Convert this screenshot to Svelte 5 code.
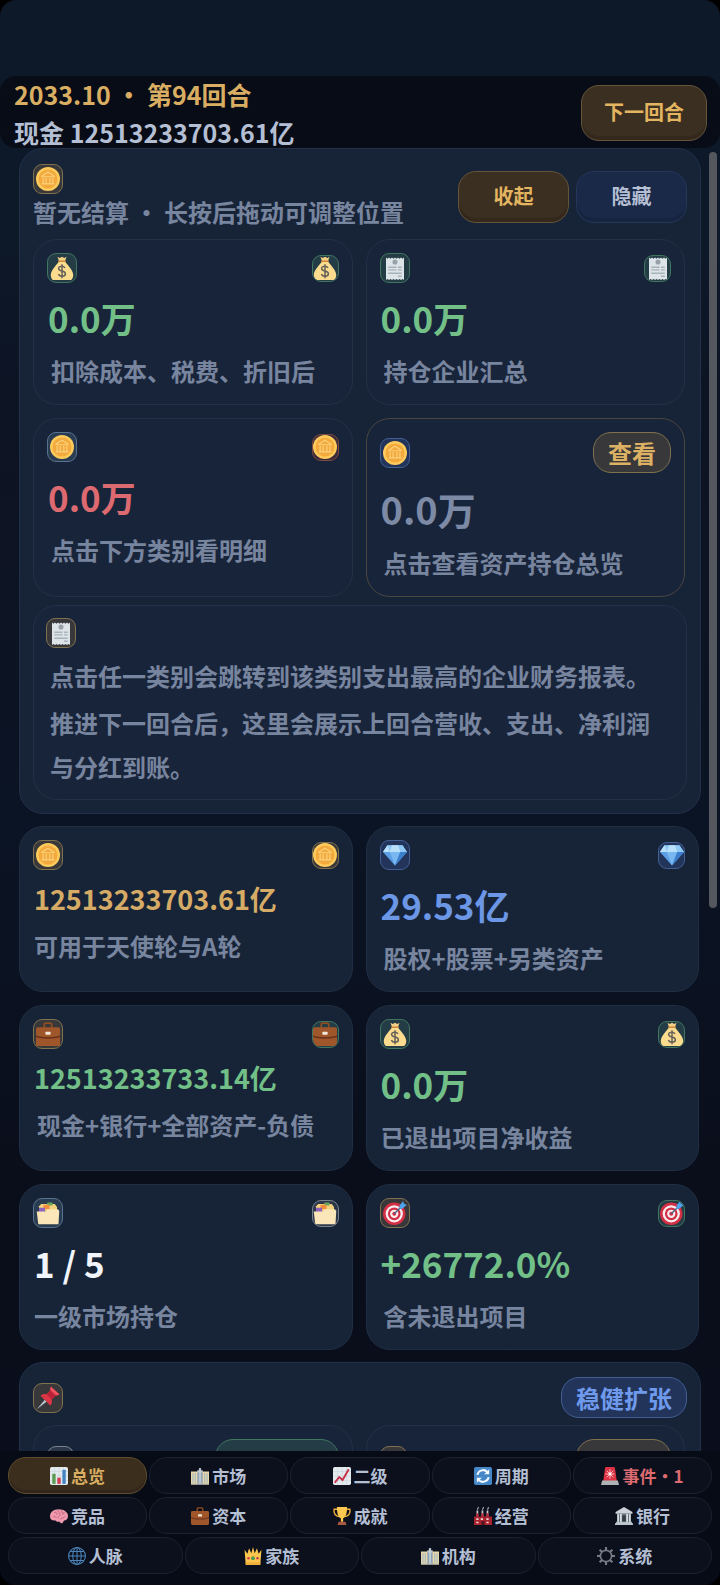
<script>
  let active = $state('总览');
  let collapsed = $state(false);

  const settlement = [
    { icon: 'bag', tint: 'green', badge: 'green', value: '0.0万', tone: 'up', note: '扣除成本、税费、折旧后', inset: true },
    { icon: 'receipt', tint: 'green', badge: 'green', value: '0.0万', tone: 'up', note: '持仓企业汇总', inset: true },
    { icon: 'coin', tint: 'sky', badge: 'red', value: '0.0万', tone: 'down', note: '点击下方类别看明细', inset: true },
    { icon: 'coin', tint: 'blue', action: '查看', value: '0.0万', tone: 'flat', note: '点击查看资产持仓总览', inset: true }
  ];

  const stats = [
    { icon: 'coin', tint: 'gold', badge: 'gold', value: '12513233703.61亿', tone: 'gold', small: true, note: '可用于天使轮与A轮' },
    { icon: 'gem', tint: 'blue', badge: 'blue', value: '29.53亿', tone: 'info', note: '股权+股票+另类资产', inset: true },
    { icon: 'case', tint: 'gold', badge: 'green', value: '12513233733.14亿', tone: 'up', small: true, note: '现金+银行+全部资产-负债', inset: true },
    { icon: 'bag', tint: 'green', badge: 'green', value: '0.0万', tone: 'up', note: '已退出项目净收益' },
    { icon: 'files', tint: 'sky', badge: 'grey', value: '1 / 5', tone: 'plain', note: '一级市场持仓' },
    { icon: 'target', tint: 'gold', badge: 'green', value: '+26772.0%', tone: 'up', note: '含未退出项目', inset: true }
  ];

  const tabRows = [
    [
      { icon: 'bars', label: '总览' },
      { icon: 'city', label: '市场' },
      { icon: 'trend', label: '二级' },
      { icon: 'cycle', label: '周期' },
      { icon: 'siren', label: '事件', count: 1 }
    ],
    [
      { icon: 'brain', label: '竞品' },
      { icon: 'case', label: '资本' },
      { icon: 'trophy', label: '成就' },
      { icon: 'factory', label: '经营' },
      { icon: 'bank', label: '银行' }
    ],
    [
      { icon: 'globe', label: '人脉' },
      { icon: 'crown', label: '家族' },
      { icon: 'city', label: '机构' },
      { icon: 'gear', label: '系统' }
    ]
  ];
</script>

{#snippet icon(name)}
  <svg class="icon" viewBox="0 0 32 32" aria-hidden="true">
    {#if name === 'coin'}
      <circle cx="16" cy="16" r="16" fill="#fccb5c" />
      <circle cx="16" cy="16" r="12.6" fill="#f3a93c" />
      <path d="M8 12 16 7l8 5v1H8zM9.500 14.500v7M13.500 14.500v7M18.500 14.500v7M22.500 14.500v7M7.500 22.500h17" fill="none" stroke="#fbd27c" stroke-width="1.600" />
    {:else if name === 'bag'}
      <path d="M10 1l3 1.500L16 1l3 1.500L22 1l-2 6h-8z" fill="#f3d083" />
      <path d="M12 7h8c2 4 10 10 11 18 0 6-3 8-7 8H8c-4 0-7-2-7-8C2 17 10 11 12 7z" fill="#fbdc8e" />
      <path d="M11 7h10" stroke="#cf8740" stroke-width="2" />
      <path d="M20 16c-1-2-3-2.500-4.500-2.500-2.200 0-4 1.200-4 3.200 0 4.600 9 2.200 9 7 0 2.200-2 3.300-4.500 3.300-2 0-4-.8-4.800-2.800M16 11v18.500" fill="none" stroke="#66615a" stroke-width="2" />
    {:else if name === 'receipt'}
      <path d="M4 2l2 1.500L8 2l2 1.500L12 2l2 1.500L16 2l2 1.500L20 2l2 1.500L24 2l2 1.500L28 2v30l-2-1.500-2 1.500-2-1.500-2 1.500-2-1.500-2 1.500-2-1.500-2 1.500-2-1.500L8 32l-2-1.500L4 32z" fill="#dde4e8" />
      <circle cx="16" cy="8" r="3.400" fill="#98a2ab" />
      <path d="M7 15h11M20 15h5M7 18.500h11M20 18.500h5M7 23h18M20 27h5" stroke="#a8b2ba" stroke-width="1.800" />
    {:else if name === 'case'}
      <path d="M11 8V3.500C11 2 12 1.500 13 1.500h6c1 0 2 .5 2 2V8" fill="none" stroke="#8d4c22" stroke-width="2.400" />
      <rect y="7" width="32" height="25" rx="2.500" fill="#a0562b" />
      <path d="M0 18c8 3 24 3 32 0v2c-8 3-24 3-32 0z" fill="#66301b" />
      <rect x="12.500" y="13" width="7" height="4" rx="1" fill="#f2e7dc" />
    {:else if name === 'gem'}
      <path d="M6 3h20l6 9-16 18L0 12z" fill="#5c9fe6" />
      <path d="M6 3h20l6 9H0z" fill="#8fc8f5" />
      <path d="M6 3l3 9H0zM12 3h8l3 9H9z" fill="#b9e0fb" />
      <path d="M9 12h14l-7 18z" fill="#79b7f0" />
      <path d="M23 12h9L16 30z" fill="#3c7fcc" />
    {:else if name === 'files'}
      <path d="M4 14V7l3-3h18l3 4v6z" fill="#f4d27c" />
      <path d="M15 2h7v4h-7z" fill="#67a55b" />
      <path d="M10 5h8v6h-8z" fill="#ef8d3c" />
      <path d="M4 9h8v6H4z" fill="#8d62bd" />
      <path d="M1 14h12l2-3h14l2 2-1 18H3z" fill="#fae6b8" />
    {:else if name === 'target'}
      <circle cx="15" cy="17" r="15" fill="#d32f45" />
      <circle cx="15" cy="17" r="11.500" fill="#f8eef0" />
      <circle cx="15" cy="17" r="8.500" fill="#d32f45" />
      <circle cx="15" cy="17" r="5.500" fill="#f8eef0" />
      <circle cx="15" cy="17" r="2.600" fill="#d32f45" />
      <path d="M15 17 26 6" stroke="#4c6785" stroke-width="2" />
      <path d="M22 6l5-6 1 4 4 1-6 5-4 1z" fill="#4ea4ee" />
    {:else if name === 'pin'}
      <path d="M12 18 1 31l13-10z" fill="#b8c8d2" />
      <path d="M20 1 31 11c-2 2-4 2-5 2l-5 5c1 4 0 6-2 8L6 13c2-2 5-3 8-2l5-5c0-2 0-3 1-5z" fill="#dc3545" />
      <path d="M14 11l7 7 5-5-7-7z" fill="#b92336" />
      <path d="M20 1 31 11c-1 1-3 1-4 1L19 5c0-2 0-3 1-4z" fill="#ef5360" />
    {:else if name === 'bars'}
      <rect width="32" height="32" rx="3" fill="#e3ebee" />
      <path d="M0 8h32M0 16h32M0 24h32M8 0v32M16 0v32M24 0v32" stroke="#c7d2d8" />
      <path d="M4 12h6v18H4z" fill="#5a9d50" />
      <path d="M13 19h6v11h-6z" fill="#cf3b4f" />
      <path d="M22 5h6v25h-6z" fill="#4484c4" />
    {:else if name === 'trend'}
      <rect width="32" height="32" rx="3" fill="#e3ebee" />
      <path d="M0 8h32M0 16h32M0 24h32M8 0v32M16 0v32M24 0v32" stroke="#c7d2d8" />
      <path d="M3 28l8-10 6 5L28 4" fill="none" stroke="#c93148" stroke-width="3.400" />
    {:else if name === 'city'}
      <path d="M11 6h10v25H11z" fill="#c3ccd2" />
      <path d="M16 2v5" stroke="#c3ccd2" stroke-width="4" />
      <path d="M0 8h11v23H0zM21 8h11v23H21z" fill="#ead8aa" />
      <path d="M3.500 11v17M7.500 11v17M24.500 11v17M28.500 11v17" stroke="#8db0c6" stroke-width="1.600" />
      <path d="M13.500 10v19M18.500 10v19" stroke="#7e9cb4" stroke-width="1.600" />
      <path d="M0 30.500h32" stroke="#a9aaa2" stroke-width="2" />
    {:else if name === 'cycle'}
      <rect width="32" height="32" rx="3" fill="#4687c8" />
      <path d="M6 14a10.500 10.500 0 0 1 18-5M26 18a10.500 10.500 0 0 1-18 5" fill="none" stroke="#f3f8fc" stroke-width="3.600" />
      <path d="M27 4v9h-9zM5 28v-9h9z" fill="#f3f8fc" />
    {:else if name === 'siren'}
      <path d="M4 25 7 3c0-2 1-3 3-3h12c2 0 3 1 3 3l3 22z" fill="#dc3243" />
      <path d="M16 4v17M8 12.500h16M10 6.500l12 12M22 6.500l-12 12" stroke="#ffc4c8" stroke-width="1.600" />
      <circle cx="16" cy="12.500" r="2.600" fill="#fff" />
      <path d="M2 24h28l2 8H0z" fill="#aeb3b5" />
    {:else if name === 'brain'}
      <path d="M0 17C0 9 6 4 15 4c10 0 17 5 17 12 0 5-3 8-7 8l-3 5c-2 0-4-1-5-3-3 1-6 0-7-2-6 1-10-2-10-7z" fill="#ef9aae" />
      <path d="M5 18c3-3 5-1 6 1M7 10c3-2 6 0 5 4M14 5c-1 4 4 4 4 8s-4 3-4 7M21 6c-2 4 4 4 2 8M18 22c2-3 6-2 9-5M27 10c-2 1-3 1-5 0" fill="none" stroke="#c4627c" stroke-width="1.600" />
    {:else if name === 'trophy'}
      <path d="M8 4H2c-1 7 2 12 9 13M24 4h6c1 7-2 12-9 13" fill="none" stroke="#f0b03e" stroke-width="2.400" />
      <path d="M7 0h18c0 11-2 18-7 20v6h-4v-6C9 18 7 11 7 0z" fill="#fcc850" />
      <path d="M10 26h12l2 6H8z" fill="#a95a42" />
    {:else if name === 'factory'}
      <path d="M6 18V6M15 18V6M24 18V6" stroke="#cfcfd2" stroke-width="3" />
      <path d="M6 5l2-5M15 5l2-5M24 5l2-5" stroke="#9da7b4" stroke-width="2" />
      <path d="M4 11h4v7H4zM13 11h4v7h-4zM22 11h4v7h-4z" fill="#b52a38" />
      <path d="M0 17h32v15H0z" fill="#a8222f" />
      <path d="M4 20h4v3H4zM12 20h4v3h-4zM22 20h4v3h-4zM4 26h4v3H4zM22 26h4v3h-4z" fill="#efd4d0" />
      <path d="M13 25h6v7h-6z" fill="#5c1520" />
    {:else if name === 'bank'}
      <path d="M16 0 31 9v3H1V9z" fill="#cbd3d8" />
      <path d="M4 12h24v14H4z" fill="#6d7780" />
      <path d="M5.500 12v15M10.500 12v15M21.500 12v15M26.500 12v15" stroke="#d8dfe3" stroke-width="3" />
      <path d="M13 15h6v12h-6z" fill="#2f3943" />
      <path d="M2 26h28v3H2zM0 29h32v3H0z" fill="#bcc5cb" />
    {:else if name === 'globe'}
      <g fill="none" stroke="#4c86bd" stroke-width="1.800">
        <circle cx="16" cy="16" r="15" />
        <ellipse cx="16" cy="16" rx="7.500" ry="15" />
        <path d="M16 1v30M1 16h30M4 8h24M4 24h24" />
      </g>
    {:else if name === 'crown'}
      <path d="M1 5l5 7 3-10 4 9 3-11 3 11 4-9 3 10 5-7-2 26H3z" fill="#fcc54d" />
      <path d="M3 27h26v5H3z" fill="#f0b03d" />
      <circle cx="16" cy="20" r="3.400" fill="#4d9a4f" />
      <circle cx="8" cy="20" r="2.300" fill="#cf3d52" />
      <circle cx="24" cy="20" r="2.300" fill="#cf3d52" />
    {:else if name === 'gear'}
      <circle cx="16" cy="16" r="10" fill="none" stroke="#747b84" stroke-width="3" />
      <path d="M16 0v6M16 26v6M0 16h6M26 16h6M4.700 4.700l4.200 4.200M23.100 23.100l4.200 4.200M27.300 4.700l-4.200 4.200M8.900 23.100l-4.200 4.200" stroke="#747b84" stroke-width="3.800" />
    {/if}
  </svg>
{/snippet}

{#snippet card(item, nested)}
  <article class="card" class:nested class:linked={item.action}>
    <div class="card-top">
      <span class="tile {item.tint}">{@render icon(item.icon)}</span>
      {#if item.action}
        <button class="pill gold">{item.action}</button>
      {:else}
        <span class="tile mini {item.badge}">{@render icon(item.icon)}</span>
      {/if}
    </div>
    <p class="value {item.tone}" class:small={item.small}>{item.value}</p>
    <p class="muted note" class:inset={item.inset}>{item.note}</p>
  </article>
{/snippet}

<div class="app">
  <header class="topbar">
    <div class="summary">
      <p class="date">2033.10 · 第94回合</p>
      <p class="cash">现金 12513233703.61亿</p>
    </div>
    <button class="btn primary next">下一回合</button>
  </header>

  <div class="body">
    <main>
      <section class="panel">
        <div class="panel-head">
          <div>
            <span class="tile gold">{@render icon('coin')}</span>
            <p class="muted">暂无结算 · 长按后拖动可调整位置</p>
          </div>
          <div class="actions">
            <button class="btn primary" onclick={() => (collapsed = !collapsed)}>{collapsed ? '展开' : '收起'}</button>
            <button class="btn">隐藏</button>
          </div>
        </div>
        {#if !collapsed}
          <div class="grid">
            {#each settlement as item}
              {@render card(item, true)}
            {/each}
          </div>
          <div class="tips">
            <span class="tile gold">{@render icon('receipt')}</span>
            <p class="muted">点击任一类别会跳转到该类别支出最高的企业财务报表。</p>
            <p class="muted">推进下一回合后，这里会展示上回合营收、支出、净利润与分红到账。</p>
          </div>
        {/if}
      </section>

      <section class="grid">
        {#each stats as item}
          {@render card(item, false)}
        {/each}
      </section>

      <section class="panel">
        <div class="card-top strategy">
          <span class="tile gold">{@render icon('pin')}</span>
          <span class="pill blue">稳健扩张</span>
        </div>
        <div class="grid">
          <div class="card nested">
            <div class="card-top">
              <span class="tile mini grey"></span>
              <span class="pill green wide"></span>
            </div>
          </div>
          <div class="card nested">
            <div class="card-top">
              <span class="tile mini gold"></span>
              <span class="pill gold mid"></span>
            </div>
          </div>
        </div>
      </section>
    </main>
    <div class="thumb"></div>
  </div>

  <nav>
    {#each tabRows as row}
      <div class="tabs">
        {#each row as tab}
          <button
            class="tab"
            class:active={active === tab.label}
            class:alert={tab.count}
            onclick={() => (active = tab.label)}
          >
            {@render icon(tab.icon)}
            <span>{tab.label}{tab.count ? `·${tab.count}` : ''}</span>
          </button>
        {/each}
      </div>
    {/each}
  </nav>
</div>

<style>
  :global(body) {
    margin: 0;
    background: #000;
  }

  .app {
    display: flex;
    flex-direction: column;
    box-sizing: border-box;
    height: 100vh;
    padding-top: 76px;
    overflow: hidden;
    border-radius: 16px;
    background: linear-gradient(#0d1828 0%, #0d1828 15%, #0d1323 30%, #0b1424 52%, #0a0e1b 75%, #0a0f1d 100%);
    color: #f1f5fb;
    font-family: "Noto Sans CJK SC", sans-serif;
    font-weight: 700;
  }

  p {
    margin: 0;
  }

  button {
    margin: 0;
    padding: 0;
    font: inherit;
    color: inherit;
    cursor: pointer;
  }

  .topbar {
    display: flex;
    flex: none;
    justify-content: space-between;
    align-items: center;
    box-sizing: border-box;
    height: 72px;
    padding: 2px 13px 0 14px;
    border-radius: 16px;
    background: #080c16;
  }

  .summary {
    font-size: 25px;
    line-height: 38px;
  }

  .date {
    color: #d9ae63;
  }

  .cash {
    color: #b4bfd4;
  }

  .btn {
    box-sizing: border-box;
    width: 111px;
    height: 52px;
    padding-bottom: 4px;
    border: 1px solid #25375a;
    border-radius: 18px;
    background: #1a2948;
    box-shadow: inset 0 -4px 0 #172440;
    color: #b4bfd4;
    font-size: 20px;
  }

  .btn.primary {
    border-color: #65543a;
    background: #3a2f20;
    box-shadow: inset 0 -4px 0 #33281b;
    color: #e3b560;
  }

  .btn.next {
    width: 126px;
    height: 56px;
  }

  .body {
    position: relative;
    flex: 1;
    min-height: 0;
  }

  main {
    display: flex;
    flex-direction: column;
    gap: 12px;
    box-sizing: border-box;
    height: 100%;
    padding: 0 19px;
    overflow-y: auto;
    scrollbar-width: none;
  }

  .thumb {
    position: absolute;
    top: 4px;
    right: 3px;
    width: 8px;
    height: 58%;
    border-radius: 4px;
    background: #54585e;
  }

  .panel {
    flex: none;
    padding: 14px 13px 13px;
    border: 1px solid #22304a;
    border-radius: 24px;
    background: #172438;
  }

  .panel-head {
    display: flex;
    justify-content: space-between;
    align-items: center;
    padding: 1px 0 9px;
  }

  .actions {
    display: flex;
    gap: 7px;
  }

  .muted {
    color: #78859f;
    font-size: 24px;
    line-height: 36px;
  }

  .grid {
    display: grid;
    grid-template-columns: 1fr 1fr;
    gap: 13px;
    margin-right: 2px;
  }

  .card {
    padding: 13px 13px 15px;
    border: 1px solid #202e43;
    border-radius: 24px;
    background: #172437;
  }

  .card.nested {
    border-color: #223048;
    background: #18243a;
  }

  .card.linked {
    border-color: #4b4640;
  }

  .card-top {
    display: flex;
    justify-content: space-between;
    align-items: center;
  }

  .strategy {
    margin-bottom: 7px;
  }

  .tile {
    display: flex;
    justify-content: center;
    align-items: center;
    box-sizing: border-box;
    width: 30px;
    height: 30px;
    border: 1px solid;
    border-radius: 9px;
    overflow: hidden;
  }

  .tile.mini {
    width: 27px;
    height: 27px;
  }

  .icon {
    flex: none;
    width: 24px;
    height: 24px;
  }

  .pill {
    box-sizing: border-box;
    height: 41px;
    padding: 0 14px;
    border: 1px solid;
    border-radius: 18px;
    font-size: 24px;
    line-height: 39px;
  }

  .gold {
    border-color: #80714f;
    background: #38383b;
  }

  .green {
    border-color: #40755f;
    background: #243c45;
  }

  .blue {
    border-color: #425f94;
    background: #22345a;
  }

  .sky {
    border-color: #597290;
    background: #2a3c52;
  }

  .red {
    border-color: #80493e;
    background: #3a2a3b;
  }

  .grey {
    border-color: #7a8290;
    background: #2c3849;
  }

  .pill.gold {
    color: #dcb164;
  }

  .pill.blue {
    color: #6f9aec;
  }

  .wide {
    width: 124px;
  }

  .mid {
    width: 95px;
  }

  .value {
    margin: 10px 0;
    padding-left: 1px;
    background: none;
    font-size: 35px;
    line-height: 50px;
  }

  .value.small {
    font-size: 27px;
    line-height: 38px;
  }

  .value.up {
    color: #72c088;
  }

  .value.down {
    color: #dc6a70;
  }

  .value.flat {
    color: #7d8aa5;
    font-size: 38px;
    line-height: 52px;
  }

  .value.gold {
    color: #d6ab66;
  }

  .value.info {
    color: #6c97e6;
  }

  .note {
    padding-left: 1px;
  }

  .note.inset {
    padding-left: 4px;
  }

  .tips {
    margin-top: 8px;
    padding: 12px 16px 10px 12px;
    border: 1px solid #223048;
    border-radius: 24px;
    background: #18243a;
  }

  .tips .muted {
    margin: 3px 0 0 4px;
    line-height: 44px;
  }

  .tips .tile {
    margin-bottom: 6px;
  }

  nav {
    display: flex;
    flex: none;
    flex-direction: column;
    gap: 3px;
    padding: 6px 8px 11px;
    background: #060b16;
  }

  .tabs {
    display: flex;
    gap: 2px;
  }

  .tab {
    display: flex;
    flex: 1;
    justify-content: center;
    align-items: center;
    gap: 3px;
    height: 37px;
    border: 1px solid #1b222f;
    border-radius: 18px;
    background: #0b101c;
    color: #b4bfd4;
    font-size: 17px;
    line-height: 24px;
  }

  .tab .icon {
    width: 18px;
    height: 18px;
  }

  .tab.active {
    border-color: #5e4c2e;
    background: #3b2e1c;
    box-shadow: inset 0 -3px 0 #32271a;
    color: #d9ae63;
  }

  .tab.alert {
    color: #dc6a70;
  }
</style>
